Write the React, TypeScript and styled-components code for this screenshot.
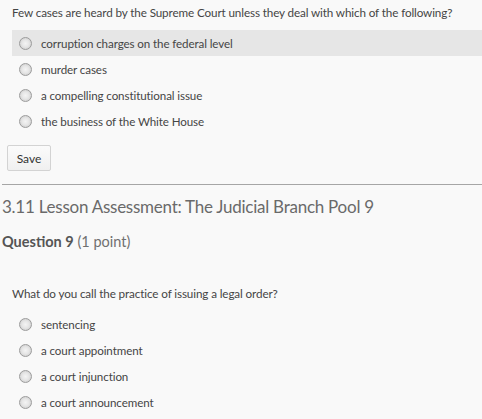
import React from 'react';
import styled, { createGlobalStyle } from 'styled-components';

const GlobalStyle = createGlobalStyle`
  html, body {
    margin: 0;
    padding: 0;
    background: #f9f9f9;
  }
  body {
    font-family: Lato, 'Open Sans', sans-serif;
    color: #454545;
  }
`;

interface Question {
  prompt: string;
  options: string[];
  hovered?: number;
}

const first: Question = {
  prompt: 'Few cases are heard by the Supreme Court unless they deal with which of the following?',
  options: [
    'corruption charges on the federal level',
    'murder cases',
    'a compelling constitutional issue',
    'the business of the White House',
  ],
  hovered: 0,
};

const second: Question = {
  prompt: 'What do you call the practice of issuing a legal order?',
  options: ['sentencing', 'a court appointment', 'a court injunction', 'a court announcement'],
};

const Page = styled.div`
  width: 482px;
  height: 419px;
  overflow: hidden;
  display: flex;
  flex-direction: column;
`;

const Block = styled.div<{ $top: number }>`
  padding: ${p => p.$top}px 0 0 12px;
  display: flex;
  flex-direction: column;
`;

const Prompt = styled.div`
  font-size: 11.7px;
  letter-spacing: -0.12px;
  line-height: 17px;
  margin-bottom: 9px;
  white-space: nowrap;
`;

const OptionList = styled.div`
  display: flex;
  flex-direction: column;
`;

const OptionRow = styled.label<{ $hover?: boolean }>`
  display: flex;
  align-items: center;
  gap: 9px;
  height: 26px;
  padding-left: 7px;
  font-size: 11.6px;
  letter-spacing: -0.1px;
  background: ${p => (p.$hover ? '#e6e6e6' : 'transparent')};
`;

// old-style windows radio: grey ring, soft light centre
const Radio = styled.span`
  width: 11px;
  height: 11px;
  border-radius: 50%;
  border: 1px solid #9c9c9c;
  background: radial-gradient(circle at 50% 50%, #f4f4f4 0%, #e6e6e6 45%, #c4c4c4 100%);
  flex-shrink: 0;
`;

const SaveButton = styled.button`
  margin: 11px 0 0 7px;
  width: 44px;
  height: 26px;
  padding: 0;
  border: 1px solid #d3d3d3;
  border-radius: 2px;
  background: linear-gradient(#fbfbfb, #f0f0f0);
  font-family: Lato, 'Open Sans', sans-serif;
  font-size: 12px;
  color: #333;
  align-self: flex-start;
`;

const Divider = styled.hr`
  margin: 13px 0 0 2px;
  border: none;
  border-top: 1px solid #a6a6a6;
  height: 0;
`;

const Heading = styled.h2`
  margin: 10px 0 0 2px;
  font-size: 17px;
  letter-spacing: -0.25px;
  font-weight: 400;
  line-height: 24px;
  color: #6a6a6a;
  white-space: nowrap;
`;

const QuestionTitle = styled.div`
  margin: 13px 0 0 2px;
  font-size: 14.5px;
  line-height: 20px;
  color: #707070;

  strong {
    color: #555;
    font-weight: 700;
  }
`;

function QuestionBlock({ q, top }: { q: Question; top: number }) {
  return (
    <Block $top={top}>
      <Prompt>{q.prompt}</Prompt>
      <OptionList>
        {q.options.map((o, i) => (
          <OptionRow key={o} $hover={q.hovered === i}>
            <Radio />
            {o}
          </OptionRow>
        ))}
      </OptionList>
    </Block>
  );
}

export default function App() {
  return (
    <Page>
      <GlobalStyle />
      <QuestionBlock q={first} top={4} />
      <SaveButton>Save</SaveButton>
      <Divider />
      <Heading>3.11 Lesson Assessment: The Judicial Branch Pool 9</Heading>
      <QuestionTitle>
        <strong>Question 9</strong> (1 point)
      </QuestionTitle>
      <QuestionBlock q={second} top={33} />
    </Page>
  );
}
